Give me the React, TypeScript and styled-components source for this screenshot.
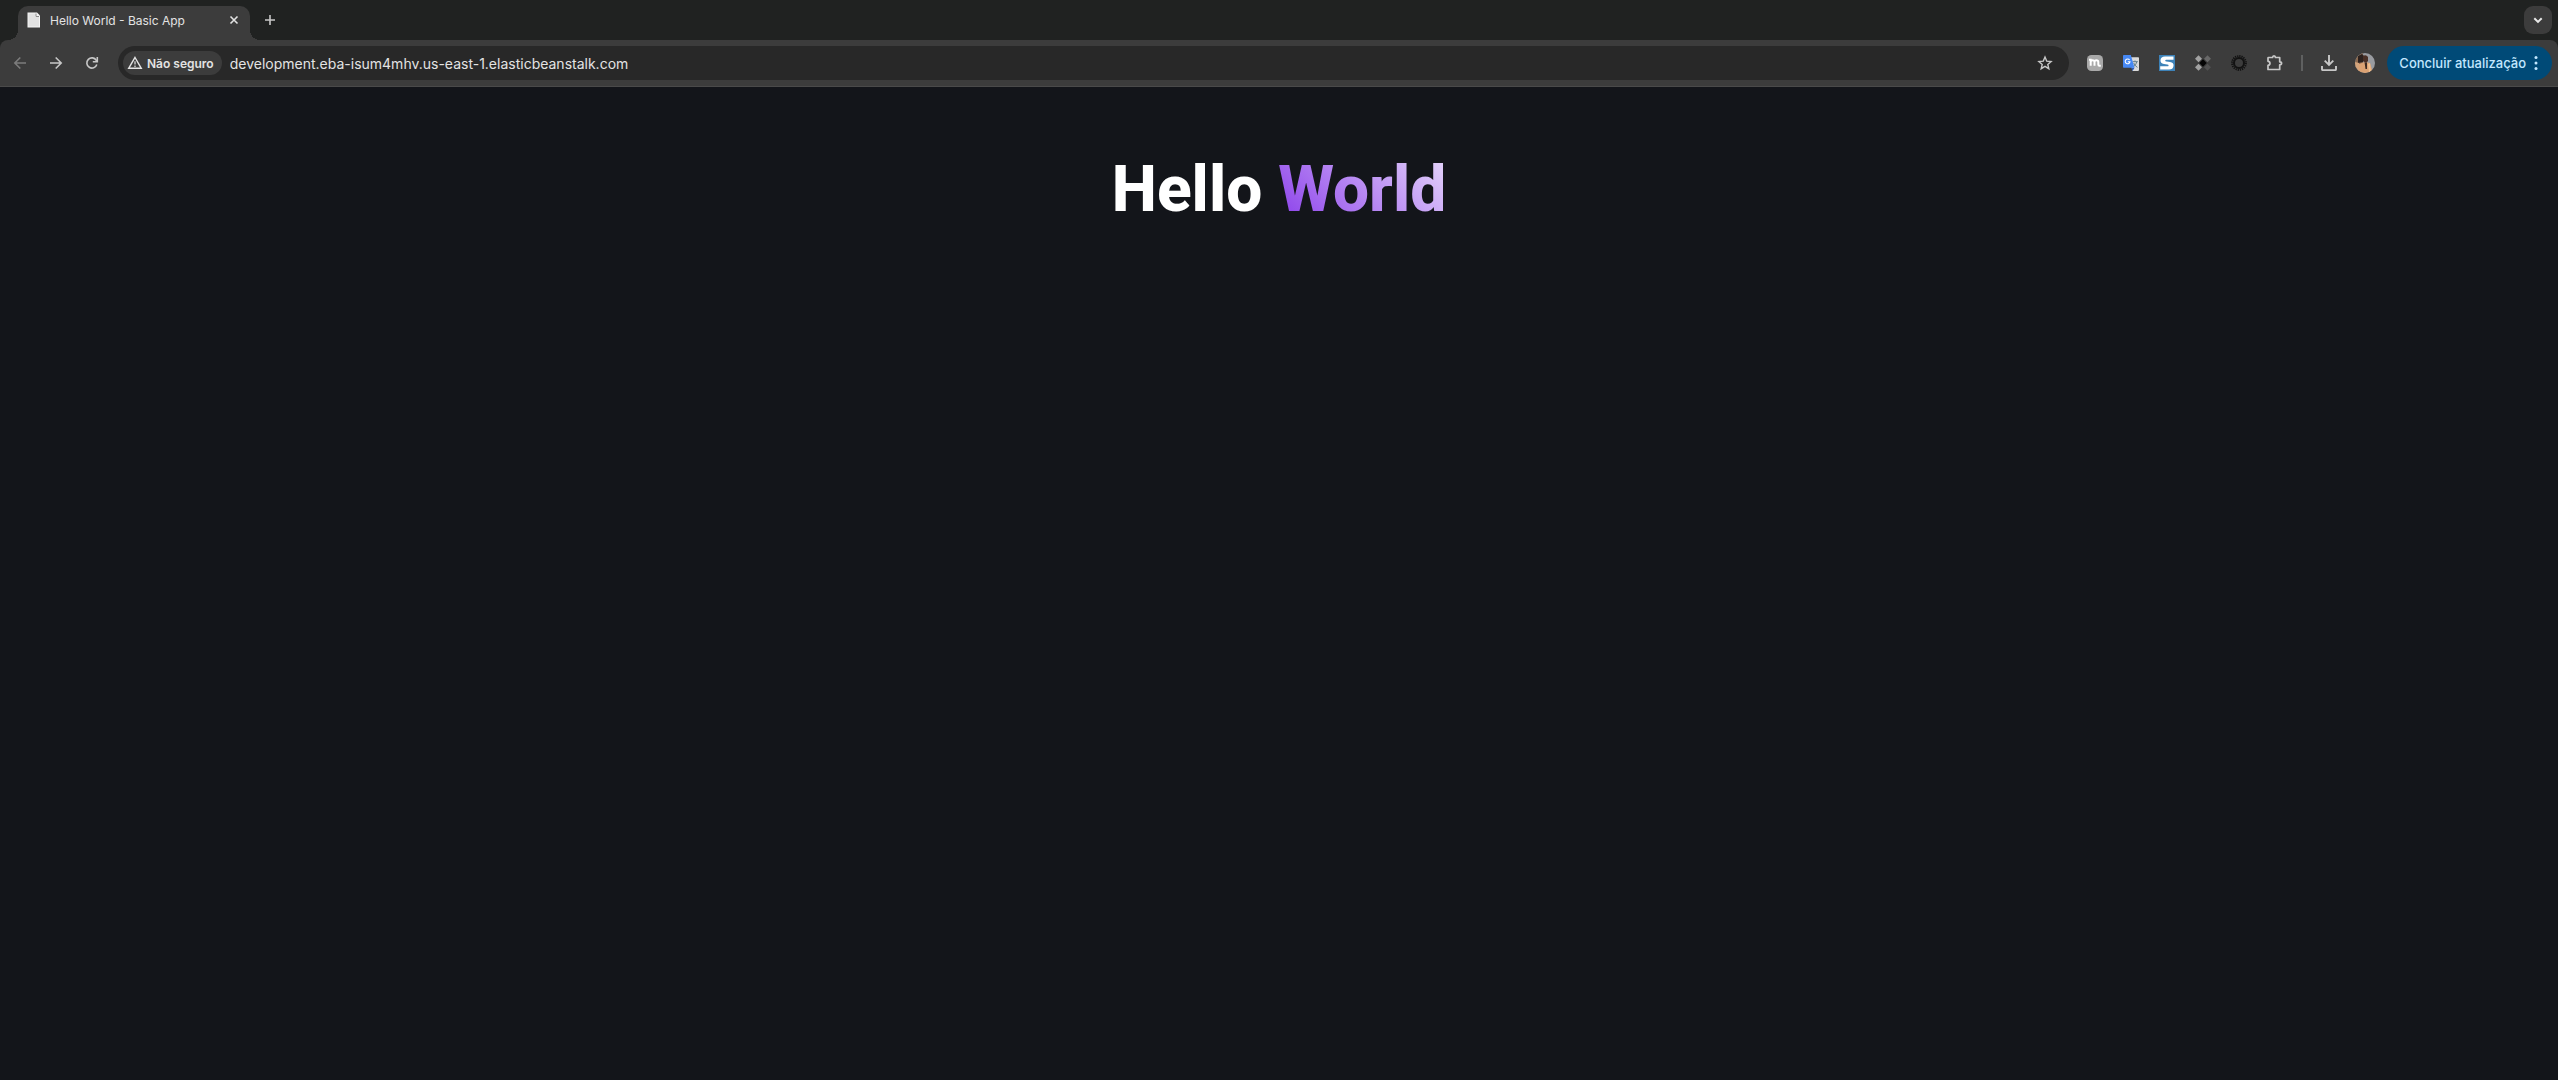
import React from "react";
import styled, { createGlobalStyle } from "styled-components";

const GlobalStyle = createGlobalStyle`
  * { box-sizing: border-box; }
  html, body { margin: 0; background: #13151a; }
  body { font-family: Inter, Roboto, "Liberation Sans", sans-serif; }
  button, input { font: inherit; color: inherit; }
  button { border: 0; padding: 0; background: none; }
  svg { display: block; flex: none; }
`;

const Window = styled.div`
  min-height: 100vh;
  display: flex;
  flex-direction: column;
  background: #13151a;
`;

const Chrome = styled.header`
  background: #202221;
`;

const TabStrip = styled.div`
  display: flex;
  align-items: flex-end;
  height: 40px;
  padding: 0 6px 0 18px;
`;

const Tab = styled.div`
  position: relative;
  display: flex;
  align-items: center;
  width: 232px;
  height: 34px;
  padding: 0 8px 6px;
  gap: 8px;
  border-radius: 10px 10px 0 0;
  background: #3c3c3c;
  color: #e3e3e3;
  font-size: 12px;

  &::before, &::after {
    content: "";
    position: absolute;
    bottom: 0;
    width: 10px;
    height: 10px;
  }
  &::before {
    right: 100%;
    background: radial-gradient(circle at 0 0, transparent 10px, #3c3c3c 10px);
  }
  &::after {
    left: 100%;
    background: radial-gradient(circle at 100% 0, transparent 10px, #3c3c3c 10px);
  }
`;

const TabTitle = styled.span`
  flex: 1;
  white-space: nowrap;
`;

const IconButton = styled.button<{ $size?: number; $tone?: string }>`
  display: grid;
  place-items: center;
  flex: none;
  width: ${(p) => p.$size ?? 36}px;
  height: ${(p) => p.$size ?? 36}px;
  color: ${(p) => p.$tone ?? "#c7c7c7"};
`;

const NewTab = styled(IconButton)`
  margin: 0 0 6px 6px;
`;

const TabSearch = styled(IconButton)`
  margin: 0 0 6px auto;
  border-radius: 9px;
  background: #3c3c3c;
`;

const Toolbar = styled.nav`
  display: flex;
  align-items: center;
  height: 47px;
  padding: 0 6px 0 2px;
  border-bottom: 1px solid #4a4a4a;
  border-radius: 8px 8px 0 0;
  background: #3c3c3c;
`;

const AddressBar = styled.div`
  display: flex;
  align-items: center;
  flex: 1;
  height: 34px;
  margin: 0 8px;
  padding: 0 6px 0 5px;
  border-radius: 17px;
  background: #282828;
`;

const SecurityChip = styled.button`
  display: flex;
  align-items: center;
  gap: 4px;
  height: 24px;
  padding: 0 8px 0 4px;
  border-radius: 12px;
  background: #3c3c3c;
  color: #e3e3e3;
  font-size: 12px;
  font-weight: 600;
  white-space: nowrap;
`;

const Address = styled.input`
  flex: 1;
  min-width: 0;
  height: 24px;
  margin-left: 8px;
  padding: 0;
  border: 0;
  outline: 0;
  background: none;
  color: #e3e3e3;
  font-size: 14px;
`;

const Divider = styled.span`
  width: 2px;
  height: 16px;
  margin: 0 8px;
  background: #5f6060;
`;

const UpdateButton = styled.button`
  display: flex;
  align-items: center;
  gap: 8px;
  height: 34px;
  margin-left: 4px;
  padding: 0 14px 0 12px;
  border-radius: 17px;
  background: #004a77;
  color: #c2e7ff;
  font-size: 13px;
  font-weight: 500;
  white-space: nowrap;
`;

const Page = styled.main`
  flex: 1;
  padding: 71px 16px 16px;
`;

const Title = styled.h1`
  margin: 0;
  color: #fff;
  font-family: Roboto, Inter, sans-serif;
  font-size: 64px;
  font-weight: 800;
  line-height: 64px;
  text-align: center;
`;

const Gradient = styled.span`
  background-image: linear-gradient(45deg, #883aea, #e0ccfa 30%, #fff 60%);
  background-size: 400%;
  background-position: 0%;
  background-clip: text;
  -webkit-background-clip: text;
  -webkit-text-fill-color: transparent;
`;

const FileIcon = () => (
  <svg width="16" height="16" viewBox="0 0 16 16">
    <path d="M1.500 0.500h9.500L14 3.500v12H1.500z" fill="#f4f4f4" />
    <path d="M2.500 1.500h7v3.500h3.500v9.500H2.500z" fill="#e2e2e2" />
    <path d="M10 1.500v3h3" fill="none" stroke="#8c8c8c" strokeWidth="1" />
  </svg>
);

const CloseIcon = () => (
  <svg width="16" height="16" viewBox="0 0 16 16" fill="none" stroke="currentColor" strokeWidth="1.600">
    <path d="M4.500 4.500l7 7M11.500 4.500l-7 7" />
  </svg>
);

const PlusIcon = () => (
  <svg width="16" height="16" viewBox="0 0 16 16" fill="none" stroke="currentColor" strokeWidth="1.600">
    <path d="M8 3v10M3 8h10" />
  </svg>
);

const ChevronIcon = () => (
  <svg width="16" height="16" viewBox="0 0 16 16" fill="none" stroke="currentColor" strokeWidth="2">
    <path d="M4.300 6.200L8 9.900l3.700-3.700" />
  </svg>
);

const ArrowIcon = ({ back }: { back?: boolean }) => (
  <svg width="16" height="16" viewBox="0 0 16 16" fill="none" stroke="currentColor" strokeWidth="1.600">
    <path d={back ? "M14 8H3.200M8.300 2.500L2.800 8l5.500 5.500" : "M2 8h10.800M7.700 2.500L13.200 8l-5.500 5.500"} />
  </svg>
);

const ReloadIcon = () => (
  <svg width="16" height="16" viewBox="0 0 16 16" fill="none" stroke="currentColor" strokeWidth="1.600">
    <path d="M12.800 9.500A5.100 5.100 0 1 1 12.300 5.300L13.200 6.500" />
    <path d="M13.300 2v4.700H8.800" />
  </svg>
);

const WarningIcon = () => (
  <svg width="16" height="16" viewBox="0 0 16 16">
    <path d="M8 2.500L14.300 13.300H1.700z" fill="none" stroke="currentColor" strokeWidth="1.400" />
    <path d="M8 6.300v3.200M8 10.500v1.400" stroke="currentColor" strokeWidth="1.200" />
  </svg>
);

const StarIcon = () => (
  <svg width="16" height="16" viewBox="0 0 16 16" fill="none" stroke="currentColor" strokeWidth="1.400">
    <path d="M8 2l1.700 4.100 4.400.4-3.300 2.900 1 4.300L8 11.400l-3.800 2.300 1-4.300L1.900 6.500l4.400-.4z" />
  </svg>
);

const MIcon = () => (
  <svg width="16" height="16" viewBox="0 0 16 16">
    <rect width="16" height="16" rx="4.500" fill="#a9a9a9" />
    <path
      d="M2 4.800h1.700v6M3.700 7q0-1.800 1.900-1.800T7.500 7v3.800M7.500 7q0-1.800 1.900-1.800T11.300 7v2.500q0 1.300 1.200 1.300h1.300"
      fill="none"
      stroke="#fff"
      strokeWidth="2"
    />
  </svg>
);

const TranslateIcon = () => (
  <svg width="16" height="16" viewBox="0 0 16 16">
    <path d="M6 2.300h9.200q.8 0 .8.800v12q0 .8-.8.800H9.500z" fill="#dadada" />
    <path d="M9.500 6.700h5.300M12 5.500v1.200M13.800 6.800q-.7 3.300-3.400 5M10.700 8q1 2.600 3.700 4.400" fill="none" stroke="#607d8b" strokeWidth="1" />
    <path d="M8.300 12.800h3.200L9.500 16z" fill="#2b59b5" />
    <path d="M.8 0h7L11.500 12.800H.8Q0 12.800 0 12V.8Q0 0 .8 0z" fill="#4688f4" />
    <path d="M6.600 5A2.400 2.400 0 1 0 7 6.700H4.800" fill="none" stroke="#fff" strokeWidth="1.100" />
  </svg>
);

const SIcon = () => (
  <svg width="16" height="16" viewBox="0 0 16 16">
    <rect width="16" height="16" fill="#3d82b8" />
    <path d="M14.500 1.500v3.200H7.400q-1.200 0-1.200.8t1.200 1l3.600.5q4 .6 3.500 4-.4 3.500-4.500 3.500H1.200v-3.200h7.100q1.300 0 1.300-.9t-1.300-1L5 9Q1.200 8.400 1.500 5 1.800 1.500 6 1.500z" fill="#fff" />
  </svg>
);

const DiamondsIcon = () => (
  <svg width="16" height="16" viewBox="0 0 16 16">
    <path d="M3.500.2L7 3.700 3.500 7.200 0 3.700z" fill="#a2a2a2" />
    <path d="M12.500.2L16 3.700l-3.500 3.500L9 3.700z" fill="#686868" />
    <path d="M3.500 8.800L7 12.300l-3.500 3.500L0 12.300z" fill="#a2a2a2" />
    <path d="M12.500 8.800l3.500 3.500-3.500 3.500L9 12.300z" fill="#525252" />
    <path d="M8 4.300L11.700 8 8 11.700 4.300 8z" fill="#050505" />
  </svg>
);

const SunIcon = () => (
  <svg width="16" height="16" viewBox="0 0 16 16" fill="none" stroke="#121212">
    <circle cx="8" cy="8" r="5" strokeWidth="2" />
    <circle cx="8" cy="8" r="6.900" strokeWidth="2" strokeDasharray="1.300 .87" />
  </svg>
);

const PuzzleIcon = () => (
  <svg width="18" height="18" viewBox="0 0 18 18">
    <path
      d="M2.500 3.500h4.100C6.600 1.300 9.400 1.300 9.400 3.500h4.300v4.300c2.500 0 2.500 3 0 3v4.700H2v-4.100c2.600-.2 2.600-3.900 0-4.100V4q0-.5.5-.5z"
      fill="none"
      stroke="currentColor"
      strokeWidth="1.700"
      strokeLinejoin="round"
    />
  </svg>
);

const DownloadIcon = () => (
  <svg width="16" height="16" viewBox="0 0 16 16" fill="none" stroke="currentColor" strokeWidth="1.900">
    <path d="M8 0v9.500M3.700 5.700L8 10l4.300-4.300M1 11v3.300q0 .8.800.8h12.400q.8 0 .8-.8V11" />
  </svg>
);

const Avatar = () => (
  <svg width="20" height="20" viewBox="0 0 20 20">
    <clipPath id="avatar-clip"><circle cx="10" cy="10" r="10" /></clipPath>
    <g clipPath="url(#avatar-clip)">
      <rect width="20" height="20" fill="#999ba0" />
      <path d="M0 0h8v9L5 20H0z" fill="#8b6a50" />
      <path d="M3 3l4-2 3 3-2 5-5 1z" fill="#2c211e" />
      <path d="M3 20l1-9 6-2 5 1 3 10z" fill="#dba273" />
      <path d="M0 9l4 1v8H0z" fill="#d3a47c" />
      <path d="M8 3q3-2 5 1v4l-2 2-3-2z" fill="#4a2f25" />
      <path d="M9.500 9l1.500 1 1-1v7h-1.500z" fill="#3d2a22" />
      <path d="M13 11l2-1 1 9h-2z" fill="#efc092" />
    </g>
  </svg>
);

const MoreIcon = () => (
  <svg width="4" height="16" viewBox="0 0 4 16" fill="currentColor">
    <circle cx="2" cy="2.500" r="1.500" />
    <circle cx="2" cy="8" r="1.500" />
    <circle cx="2" cy="13.500" r="1.500" />
  </svg>
);

const extensions = [
  { label: "Extensão M", icon: <MIcon /> },
  { label: "Google Tradutor", icon: <TranslateIcon /> },
  { label: "Extensão S", icon: <SIcon /> },
  { label: "Extensão de losangos", icon: <DiamondsIcon /> },
  { label: "Extensão de sol", icon: <SunIcon /> },
  { label: "Extensões", icon: <PuzzleIcon /> },
];

export default function App() {
  return (
    <Window>
      <GlobalStyle />
      <Chrome>
        <TabStrip>
          <Tab>
            <FileIcon />
            <TabTitle>Hello World - Basic App</TabTitle>
            <IconButton $size={16} $tone="#e3e3e3" aria-label="Fechar guia"><CloseIcon /></IconButton>
          </Tab>
          <NewTab $size={28} aria-label="Nova guia"><PlusIcon /></NewTab>
          <TabSearch $size={28} $tone="#e9e9e9" aria-label="Pesquisar guias"><ChevronIcon /></TabSearch>
        </TabStrip>
        <Toolbar>
          <IconButton $tone="#7c7c7c" aria-label="Voltar"><ArrowIcon back /></IconButton>
          <IconButton aria-label="Avançar"><ArrowIcon /></IconButton>
          <IconButton aria-label="Recarregar"><ReloadIcon /></IconButton>
          <AddressBar>
            <SecurityChip><WarningIcon />Não seguro</SecurityChip>
            <Address
              type="text"
              aria-label="Endereço"
              defaultValue="development.eba-isum4mhv.us-east-1.elasticbeanstalk.com"
            />
            <IconButton aria-label="Adicionar aos favoritos"><StarIcon /></IconButton>
          </AddressBar>
          {extensions.map((item) => (
            <IconButton key={item.label} aria-label={item.label}>{item.icon}</IconButton>
          ))}
          <Divider />
          <IconButton aria-label="Downloads"><DownloadIcon /></IconButton>
          <IconButton aria-label="Perfil"><Avatar /></IconButton>
          <UpdateButton>Concluir atualização<MoreIcon /></UpdateButton>
        </Toolbar>
      </Chrome>
      <Page>
        <Title>Hello <Gradient>World</Gradient></Title>
      </Page>
    </Window>
  );
}
